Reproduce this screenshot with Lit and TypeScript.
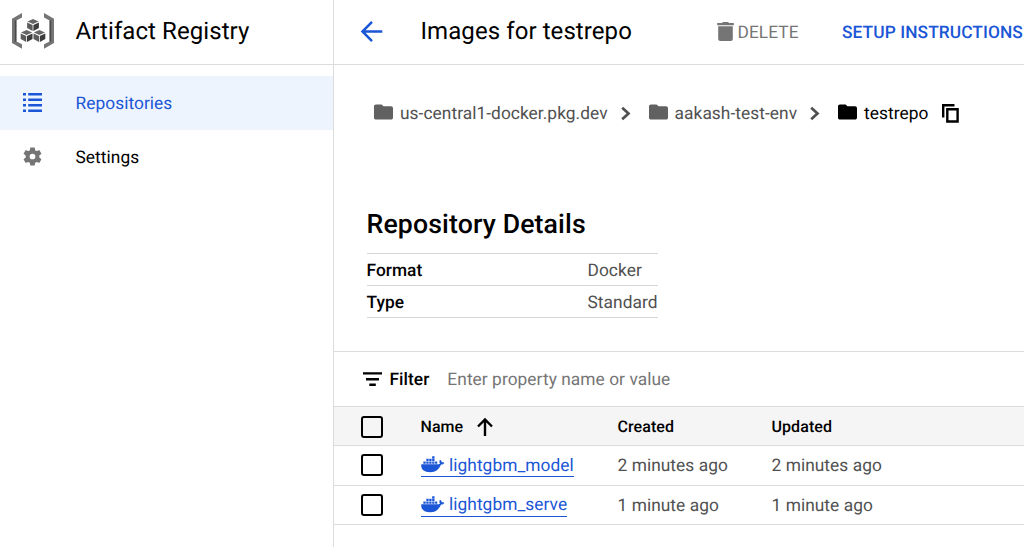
import { LitElement, html, svg, css } from "lit";
import { customElement, property } from "lit/decorators.js";

const FOLDER = "M10 4H4c-1.1 0-2 .9-2 2v12c0 1.1.9 2 2 2h16c1.1 0 2-.9 2-2V8c0-1.1-.9-2-2-2h-8z";

@customElement("ui-icon")
class UiIcon extends LitElement {
  @property() name = "";

  static styles = css`
    :host { display: block; flex: none; }
    svg { display: block; width: 100%; height: 100%; overflow: visible; fill: currentColor; }
  `;

  private shapes: Record<string, { box: string; body: unknown }> = {
    registry: {
      box: "0 0 42 36",
      body: svg`
        <path fill="#757575" d="M10 0v4.6L4.4 7.4v21.2L10 31.2v4.6L0 30V5.7z"/>
        <path fill="#757575" d="M32 0v4.6l5.6 2.8v21.2L32 31.2v4.6L42 30V5.7z"/>
        <path fill="#4a4a4a" d="M2.8 7.3l1.6.1v21.2l-1.6.1zM37.6 7.4l1.6-.1v21.4l-1.6-.1z"/>
        ${[[21, 6], [14.6, 17], [27.4, 17]].map(([x, y]) => svg`
          <g transform="translate(${x} ${y})">
            <path fill="#666" d="M0 0l5.6 2.5L0 5l-5.600-2.500z"/>
            <path fill="#5c5c5c" d="M-5.900 3.500l5.500 2.400v6.200l-5.500-3z"/>
            <path fill="#3c3c3c" d="M5.900 3.500L.4 5.900v6.200l5.500-3z"/>
          </g>`)}`,
    },
    list: {
      box: "0 0 19 19",
      body: svg`<path d="M0 0h3v2.6H0zM5.2 0H19v2.6H5.2zM0 5.5h3v2.6H0zM5.2 5.5H19v2.6H5.2zM0 11h3v2.6H0zM5.2 11H19v2.6H5.2zM0 16.4h3V19H0zM5.2 16.4H19V19H5.2z"/>`,
    },
    gear: {
      box: "2 2 20 20",
      body: svg`<path d="M19.14 12.94c.04-.3.06-.61.06-.94 0-.32-.02-.64-.07-.94l2.03-1.58c.18-.14.23-.41.12-.61l-1.92-3.32c-.12-.22-.37-.29-.59-.22l-2.39.96c-.5-.38-1.03-.7-1.62-.94l-.36-2.54c-.04-.24-.24-.41-.48-.41h-3.84c-.24 0-.43.17-.47.41l-.36 2.54c-.59.24-1.13.57-1.62.94l-2.39-.96c-.22-.08-.47 0-.59.22L2.74 8.87c-.12.21-.08.47.12.61l2.03 1.58c-.05.3-.09.63-.09.94s.02.64.07.94l-2.03 1.58c-.18.14-.23.41-.12.61l1.92 3.32c.12.22.37.29.59.22l2.39-.96c.5.38 1.03.7 1.62.94l.36 2.54c.05.24.24.41.48.41h3.84c.24 0 .44-.17.47-.41l.36-2.54c.59-.24 1.13-.56 1.62-.94l2.39.96c.22.08.47 0 .59-.22l1.92-3.32c.12-.22.07-.47-.12-.61zM12 15a3 3 0 1 1 0-6 3 3 0 0 1 0 6z"/>`,
    },
    back: {
      box: "0 0 22 21",
      body: svg`<path fill="none" stroke="currentColor" stroke-width="2.500" d="M21.300 10.500H2M11 .9L1.500 10.500l9.500 9.600"/>`,
    },
    trash: {
      box: "0 0 17 19",
      body: svg`<path d="M5.500 0h6v1h5.300v2.200H.2V1h5.300zM1.200 4.300h14.600V17c0 1.200-.9 2-2 2H3.200c-1.100 0-2-.8-2-2z"/>`,
    },
    folder: { box: "2 4 20 16", body: svg`<path d="${FOLDER}"/>` },
    chevron: {
      box: "0 0 10 13",
      body: svg`<path fill="none" stroke="currentColor" stroke-width="2.700" d="M1.200 .8l6.300 5.800-6.300 5.700"/>`,
    },
    copy: {
      box: "0 0 17 19",
      body: svg`<path fill="none" stroke="currentColor" stroke-width="2.400" d="M1.200 13.500V1.200h11.300M5.300 5.200h10.300v12.300H5.300z"/>`,
    },
    filter: {
      box: "0 0 19 14",
      body: svg`<path d="M0 .2h19v2.400H0zM3 6h13v2.400H3zM6.300 11.500h6.500v2.400H6.300z"/>`,
    },
    up: {
      box: "0 0 16 18",
      body: svg`<path fill="none" stroke="currentColor" stroke-width="2.400" d="M8 18V2M1 8.500l7-7 7 7"/>`,
    },
    docker: {
      box: "0 0 24 17",
      body: svg`
        <path d="M.3 8.300h16.900c1 0 1.900-.4 2.200-.9-.9-1.200-.8-2.700.1-3.700 1.100.8 1.600 1.600 1.700 2.500 1-.1 2 0 2.600.5-.6 1.400-1.800 2-3.400 1.900-2 5-5.300 7.800-10.900 7.800C3.300 16.400-.3 13.800.3 8.300z"/>
        <path d="M2.400 5.400h2.400v2.300H2.400zM5.400 5.400h2.400v2.300H5.400zM8.400 5.400h2.400v2.300H8.400zM11.400 5.400h2.400v2.300h-2.400zM14.400 5.400h2.200v2.300h-2.200zM5.400 2.700h2.400V5H5.400zM8.400 2.700h2.400V5H8.400zM11.400 2.700h2.400V5h-2.400zM11.400 0h2.400v2.300h-2.400z"/>`,
    },
  };

  render() {
    const s = this.shapes[this.name];
    return s ? html`<svg viewBox=${s.box} aria-hidden="true">${s.body}</svg>` : null;
  }
}

@customElement("app-root")
class AppRoot extends LitElement {
  private rows = [
    { name: "lightgbm_model", created: "2 minutes ago", updated: "2 minutes ago" },
    { name: "lightgbm_serve", created: "1 minute ago", updated: "1 minute ago" },
  ];

  static styles = css`
    * { box-sizing: border-box; }
    :host {
      display: grid; grid-template-columns: 334px 1fr; width: 100%; height: 547px;
      overflow: hidden; background: #fff; color: #000;
      font: 400 17.33px/24px Roboto, sans-serif; white-space: nowrap;
      letter-spacing: .05px; text-rendering: geometricPrecision;
    }
    .label { padding-top: 2px; }
    .side { border-right: 1px solid #dcdcdc; }
    .brand { display: flex; align-items: center; height: 65px; padding: 0 0 2px 11.5px; border-bottom: 1px solid #dcdcdc; gap: 22px; font-size: 24px; letter-spacing: .08px; }
    .brand ui-icon { width: 42px; height: 36px; }
    .nav { padding-top: 11px; }
    .item { display: flex; align-items: center; height: 54px; padding: 0 0 1px 23px; gap: 33.5px; }
    .item ui-icon { width: 19px; height: 19px; color: #757575; }
    .item.active { background: #edf4fe; color: #1a56d6; }
    .item.active ui-icon { color: #1a56d6; }
    .main { min-width: 0; }
    .bar { display: flex; align-items: center; height: 65px; padding: 0 0 2px 27px; border-bottom: 1px solid #dcdcdc; }
    .back { width: 22px; height: 21px; color: #1a56d6; }
    .title { width: 296px; margin-left: 37.5px; font-size: 24px; letter-spacing: .08px; }
    .trash { width: 17px; height: 19px; color: #757575; }
    .action { font-weight: 500; margin-top: 2px; }
    .delete { width: 104.5px; margin-left: 4px; color: #757575; font-weight: 400; }
    .setup { color: #1a56d6; letter-spacing: .08px; }
    .crumbs { display: flex; align-items: center; height: 97px; padding: 0 0 1px 40px; color: #505050; }
    .crumb { display: flex; align-items: center; gap: 7px; }
    .crumb ui-icon { width: 19px; height: 16px; color: #616161; margin-bottom: 2px; }
    .crumb.current, .crumb.current ui-icon { color: #000; }
    .chev { width: 10px; height: 13px; margin: 0 18px 0 13px; }
    .copy { width: 17px; height: 19px; margin: 0 0 0 13px; color: #000; }
    .details { width: 291.5px; margin: 43px 0 0 32.5px; }
    .heading { margin: 0; height: 48px; line-height: 38px; font-size: 26.67px; font-weight: 500; letter-spacing: .13px; }
    .pair { display: grid; grid-template-columns: 221px 1fr; height: 32px; line-height: 34px; border-top: 1px solid #d6d6d6; color: #505050; }
    .pair:last-child { border-bottom: 1px solid #d6d6d6; height: 33px; }
    .pair b { font-weight: 500; color: #000; }
    .filter { display: flex; align-items: center; margin-top: 33px; height: 55px; border-top: 1px solid #dcdcdc; padding-left: 28.5px; font-weight: 500; }
    .filter ui-icon { width: 19px; height: 14px; margin-right: 8px; }
    .hint { margin-left: 18px; font-weight: 400; color: #757575; }
    .row { display: grid; grid-template-columns: 59.5px 197px 154px 1fr; align-items: center; height: 39.300px; padding-left: 27px; border-top: 1px solid #dcdcdc; color: #505050; }
    .row:last-child { border-bottom: 1px solid #dcdcdc; height: 40px; }
    .row.head { background: #f5f5f5; color: #000; font-weight: 500; font-size: 16px; letter-spacing: .07px; padding-top: 1px; }
    .row.head .box { margin-top: 1px; }
    .box { width: 22px; height: 22px; border: 2.500px solid #000; border-radius: 3px; }
    .sort { display: flex; align-items: center; gap: 14px; }
    .sort ui-icon { width: 16px; height: 18px; }
    .link { display: flex; align-items: center; justify-self: start; gap: 5px; height: 24px; border-bottom: 1px solid #1a56d6; color: #1a56d6; }
    .link ui-icon { width: 23.5px; height: 17px; }
  `;

  render() {
    return html`
      <nav class="side">
        <div class="brand"><ui-icon name="registry"></ui-icon><span>Artifact Registry</span></div>
        <div class="nav">
          <div class="item active"><ui-icon name="list"></ui-icon><span class="label">Repositories</span></div>
          <div class="item"><ui-icon name="gear"></ui-icon><span class="label">Settings</span></div>
        </div>
      </nav>
      <main class="main">
        <header class="bar">
          <ui-icon class="back" name="back"></ui-icon>
          <span class="title">Images for testrepo</span>
          <ui-icon class="trash" name="trash"></ui-icon>
          <span class="label action delete">DELETE</span>
          <span class="label action setup">SETUP INSTRUCTIONS</span>
        </header>
        <div class="crumbs">
          <span class="crumb"><ui-icon name="folder"></ui-icon><span class="label">us-central1-docker.pkg.dev</span></span>
          <ui-icon class="chev" name="chevron"></ui-icon>
          <span class="crumb"><ui-icon name="folder"></ui-icon><span class="label">aakash-test-env</span></span>
          <ui-icon class="chev" name="chevron"></ui-icon>
          <span class="crumb current"><ui-icon name="folder"></ui-icon><span class="label">testrepo</span></span>
          <ui-icon class="copy" name="copy"></ui-icon>
        </div>
        <section class="details">
          <h2 class="heading">Repository Details</h2>
          <div class="pair"><b>Format</b><span>Docker</span></div>
          <div class="pair"><b>Type</b><span>Standard</span></div>
        </section>
        <div class="filter"><ui-icon name="filter"></ui-icon><span class="label">Filter</span><span class="label hint">Enter property name or value</span></div>
        <div class="table">
          <div class="row head"><span class="box"></span><span class="sort">Name<ui-icon name="up"></ui-icon></span><span>Created</span><span>Updated</span></div>
          ${this.rows.map((r) => html`
            <div class="row">
              <span class="box"></span>
              <span class="link"><ui-icon name="docker"></ui-icon><span class="label">${r.name}</span></span>
              <span class="label">${r.created}</span><span class="label">${r.updated}</span>
            </div>`)}
        </div>
      </main>
    `;
  }
}
